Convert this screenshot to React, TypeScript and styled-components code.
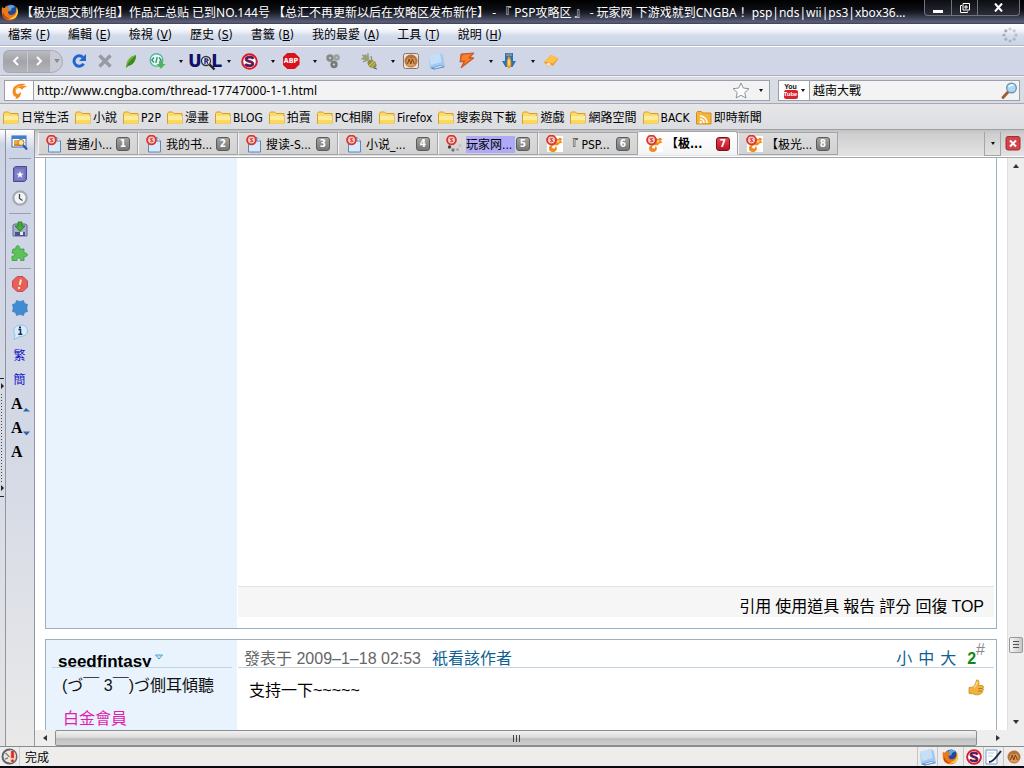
import React from 'react';
import styled, { createGlobalStyle, css } from 'styled-components';

const uiFont = `"DejaVu Sans Condensed", "Noto Sans", "Noto Sans CJK TC", sans-serif`;
const wideFont = `"Noto Sans", "Noto Sans CJK TC", sans-serif`;
const pageFont = `"Liberation Sans", "Noto Sans CJK TC", sans-serif`;

const Global = createGlobalStyle`
  *, *::before, *::after { box-sizing: border-box; }
  body { margin: 0; font: 12px/16px ${uiFont}; color: #000; }
  button, input { font: inherit; color: inherit; border: 0; padding: 0; margin: 0; background: none; }
  a { color: inherit; text-decoration: none; }
  svg { display: block; flex: none; }
`;

const Shell = styled.div`
  display: flex;
  flex-direction: column;
  height: 100vh;
  overflow: hidden;
  background: #dcdde4;
`;

/* ---------- title bar ---------- */

const TitleBar = styled.header`
  display: flex;
  align-items: center;
  height: 24px;
  padding: 0 4px 0 1px;
  background: linear-gradient(#000 0, #0c0d12 9px, #1d1f29 13px, #5b607b 22px, #3c4052 100%);
  color: #fff;
`;

const Title = styled.h1`
  flex: 1;
  min-width: 0;
  margin: 0 0 0 2px;
  font: 400 12px/16px ${wideFont};
  white-space: nowrap;
  overflow: hidden;
  padding-top: 2px;
`;

const Caption = styled.div`
  display: flex;
  align-self: flex-start;
  height: 16px;
  border: 1px solid #70737f;
  border-top: 0;
  border-radius: 0 0 4px 4px;
  background: linear-gradient(#0d0e12, #2b2d38);
`;

const CaptionButton = styled.button<{ $wide?: boolean }>`
  display: flex;
  align-items: center;
  justify-content: center;
  width: ${p => (p.$wide ? 42 : 26)}px;
  & + & { border-left: 1px solid #70737f; }
`;

/* ---------- menu ---------- */

const MenuBar = styled.nav`
  display: flex;
  align-items: center;
  height: 22px;
  background: linear-gradient(#fff 0, #f2f5fb 6px, #d3dbea 12px, #ccd5e8 100%);
  border-bottom: 1px solid #b2b7c4;
`;

const MenuItem = styled.button`
  padding: 0 10px 0 8px;
  white-space: pre;
`;

const Throbber = styled.div`
  margin-left: auto;
  padding-right: 6px;
`;

/* ---------- toolbar ---------- */

const Toolbar = styled.div`
  display: flex;
  align-items: center;
  height: 30px;
  padding-left: 3px;
  border-top: 1px solid #fff;
  border-bottom: 1px solid #a9afbd;
  background: #d1d6e6;
`;

const NavPill = styled.div`
  display: flex;
  height: 23px;
  margin-right: 7px;
  border: 1px solid #a9aab0;
  border-radius: 6px 12px 12px 6px;
  background: linear-gradient(#b9bac0, #a3a4a9 50%, #b4b5ba);
  overflow: hidden;
`;

const NavButton = styled.button<{ $small?: boolean }>`
  display: flex;
  align-items: center;
  justify-content: center;
  width: ${p => (p.$small ? 12 : 23)}px;
  background: ${p => (p.$small ? '#c9ccd6' : 'transparent')};
  & + & { border-left: 1px solid #c8c9cd; }
`;

const ToolButton = styled.button<{ $gap?: number }>`
  display: flex;
  align-items: center;
  justify-content: center;
  min-width: 18px;
  height: 22px;
  margin-left: ${p => p.$gap ?? 8}px;
`;

const CaretButton = styled.button<{ $gap?: number }>`
  width: 6px;
  height: 22px;
  margin-left: ${p => p.$gap ?? 12}px;
  display: flex;
  align-items: center;
  justify-content: center;
  &::after {
    content: '';
    border: 2px solid transparent;
    border-top: 3px solid #111;
    border-bottom: 0;
  }
`;

/* ---------- location row ---------- */

const LocationRow = styled.form`
  display: flex;
  gap: 8px;
  height: 28px;
  padding: 3px 4px 2px;
  background: #dadce4;
  border-top: 1px solid #f1f2f6;
  border-bottom: 1px solid #a5a9b2;
`;

const Field = styled.div<{ $search?: boolean }>`
  display: flex;
  align-items: stretch;
  border: 1px solid #9a9fad;
  background: #f3f3f3;
  min-width: 0;
  ${p => (p.$search ? css`flex: 0 0 242px;` : css`flex: 1;`)}
`;

const FieldIcon = styled.button<{ $divided?: boolean; $w: number }>`
  display: flex;
  align-items: center;
  justify-content: center;
  gap: 3px;
  flex: none;
  width: ${p => p.$w}px;
  ${p => p.$divided && css`background: #fdfdfd; border-right: 1px solid #9a9fad;`}
`;

const TextInput = styled.input`
  flex: 1;
  min-width: 0;
  padding: 0 3px;
  outline: 0;
  font-family: ${wideFont};
`;

/* ---------- bookmarks ---------- */

const BookmarkBar = styled.nav`
  display: flex;
  align-items: center;
  gap: 6px;
  height: 26px;
  padding: 2px 3px 0;
  background: linear-gradient(#e7e7ea, #dcdde0);
  border-bottom: 1px solid #9ea2a8;
  white-space: nowrap;
`;

const Bookmark = styled.a`
  display: flex;
  align-items: center;
  gap: 2px;
`;

/* ---------- body ---------- */

const Body = styled.div`
  flex: 1;
  min-height: 0;
  display: flex;
`;

const Splitter = styled.div`
  width: 6px;
  flex: none;
  display: flex;
  flex-direction: column;
  align-items: center;
  padding-top: 248px;
  background: linear-gradient(#fff, #cdd4e6 14px, #d6dae4 50%, #e4e4e4);
  border-right: 1px solid #8f95a3;
`;

const SideBar = styled.aside`
  width: 29px;
  flex: none;
  display: flex;
  flex-direction: column;
  align-items: stretch;
  padding: 1px 2px 0 1px;
  background: linear-gradient(#fff, #cdd4e6 20px, #d3d8e5 50%, #e9e9e9);
  border-right: 1px solid #9297a3;
`;

const SideButton = styled.button`
  height: 24px;
  display: flex;
  align-items: center;
  justify-content: center;
  color: #1111c8;
`;

const SideRule = styled.hr`
  width: 22px;
  height: 7px;
  margin: 0 auto;
  border: solid transparent;
  border-width: 3px 0;
  background: #9a9fad;
  background-clip: padding-box;
`;

const Main = styled.div`
  flex: 1;
  min-width: 0;
  display: flex;
  flex-direction: column;
`;

/* ---------- tabs ---------- */

const TabBar = styled.div`
  display: flex;
  align-items: flex-end;
  height: 28px;
  padding: 0 3px 2px;
  background: linear-gradient(#c2c2c3, #cfcfd0 4px, #e3e3e4 26px, #fff 26px);
  border-bottom: 1px solid #a4a8ae;
`;

const Tab = styled.button<{ $active?: boolean }>`
  display: flex;
  align-items: center;
  flex: 0 1 100px;
  min-width: 0;
  height: ${p => (p.$active ? 24 : 23)}px;
  padding: 1px 7px 0;
  text-align: left;
  border: 1px solid #a3a5a8;
  border-left-color: #f4f4f4;
  background: ${p => (p.$active ? 'linear-gradient(#fff, #f4f4f4)' : 'linear-gradient(#dcdcdc, #d2d2d2)')};
  font-weight: ${p => (p.$active ? 700 : 400)};
  ${p => p.$active && css`border-bottom-color: #f4f4f4; border-radius: 3px 3px 0 0;`}
`;

const TabLabel = styled.span<{ $loading?: boolean }>`
  flex: 1;
  min-width: 0;
  margin-left: 3px;
  padding-top: 1px;
  white-space: nowrap;
  overflow: hidden;
  ${p => p.$loading && css`background: #aeaaf5;`}
`;

const TabBadge = styled.span<{ $active?: boolean }>`
  flex: none;
  width: 14px;
  height: 14px;
  margin-left: 1px;
  border: 1px solid ${p => (p.$active ? '#7c1018' : '#5b5b5b')};
  border-radius: 3px;
  background: ${p => (p.$active ? 'linear-gradient(#ea4653, #b91322)' : 'linear-gradient(#a3a3a3, #777)')};
  color: #fff;
  font-size: 10px;
  line-height: 12px;
  font-weight: 700;
  text-align: center;
`;

const TabTools = styled.div`
  display: flex;
  align-self: stretch;
  align-items: center;
  margin: 2px 0 0 auto;
`;

const TabTool = styled.button`
  display: flex;
  align-items: center;
  justify-content: center;
  width: 17px;
  height: 24px;
  margin-right: 4px;
  border: 1px solid #a3a5a8;
  border-top: 0;
`;

/* ---------- page ---------- */

const Viewport = styled.div`
  flex: 1;
  min-height: 0;
  display: flex;
`;

const Page = styled.main`
  flex: 1;
  min-width: 0;
  display: flex;
  flex-direction: column;
  gap: 10px;
  padding: 0 10px;
  overflow: hidden;
  background: #fff;
  font: 16px/20px ${pageFont};
`;

const Post = styled.article<{ $grow?: boolean }>`
  display: flex;
  border: 1px solid #9db0be;
  ${p => (p.$grow
    ? css`flex: 1; min-height: 0; border-top: 0;`
    : css`flex: none; min-height: 91px; border-bottom: 0;`)}
`;

const AuthorColumn = styled.div`
  flex: 0 0 191px;
  background: #e8f3fd;
`;

const PostColumn = styled.div`
  flex: 1;
  min-width: 0;
  display: flex;
  flex-direction: column;
  padding: 0 2px 0 1px;
`;

const PostFooter = styled.footer`
  display: flex;
  justify-content: flex-end;
  align-items: center;
  gap: 4px;
  height: 31px;
  margin: auto 0 11px;
  padding: 9px 10px 0 0;
  border-top: 1px solid #dfe6ea;
  background: #f6f6f6;
`;

const AuthorName = styled.div`
  display: flex;
  align-items: flex-start;
  gap: 3px;
  height: 28px;
  margin: 0 5px 0 6px;
  padding: 12px 0 0 6px;
  border-bottom: 1px solid #c3d3e0;
  overflow: hidden;
  font-size: 17px;
  font-weight: 700;
`;

const AuthorText = styled.p<{ $rank?: boolean }>`
  margin: ${p => (p.$rank ? '13px 0 0 17px' : '8px 0 0 16px')};
  color: ${p => (p.$rank ? '#e31cb0' : '#111')};
  white-space: pre;
`;

const PostHeader = styled.div`
  display: flex;
  align-items: flex-end;
  height: 28px;
  padding: 0 9px 0 6px;
  border-bottom: 1px solid #c3d3e0;
  color: #666;
  line-height: 16px;
  white-space: nowrap;
`;

const BlueLink = styled.a`
  color: #0d5f94;
`;

const AuthorOnly = styled(BlueLink)`
  margin-left: 11px;
`;

const Sizes = styled.div`
  display: flex;
  gap: 6px;
  margin-left: auto;
`;

const Floor = styled.span`
  margin-left: 11px;
  color: #118a11;
  font-weight: 700;
`;

const Hash = styled.sup`
  align-self: flex-start;
  padding-top: 2px;
  font-size: 16px;
  color: #888;
`;

const Message = styled.div`
  display: flex;
  align-items: flex-start;
  justify-content: space-between;
  padding: 11px 10px 0 11px;
  line-height: 24px;
`;

/* ---------- scroll bars ---------- */

const VScroll = styled.div`
  width: 17px;
  flex: none;
  display: flex;
  flex-direction: column;
  align-items: center;
  background: #eee;
  border-left: 1px solid #e0e0e0;
`;

const HScroll = styled.div`
  flex: none;
  display: flex;
  height: 16px;
  background: #eee;
`;

const ScrollArrow = styled.button`
  width: 20px;
  height: 16px;
  display: flex;
  align-items: center;
  justify-content: center;
`;

const ScrollCorner = styled.span`
  width: 16px;
`;

const VThumb = styled.div`
  width: 14px;
  height: 16px;
  margin: auto 0 61px;
  padding: 3px;
  border: 1px solid #999;
  border-radius: 2px;
  background: linear-gradient(90deg, #f6f6f6, #c8c8c8);
  &::before {
    content: '';
    display: block;
    height: 7px;
    background: repeating-linear-gradient(#555 0 1px, transparent 1px 3px);
  }
`;

const HThumb = styled.div`
  flex: 1;
  display: flex;
  align-items: center;
  justify-content: center;
  margin-right: 11px;
  border: 1px solid #8c8f90;
  border-radius: 2px;
  background: linear-gradient(#f2f2f2, #dcdcdc 45%, #bdbfbf 55%, #cfcfcf);
  &::before {
    content: '';
    width: 7px;
    height: 7px;
    background: repeating-linear-gradient(90deg, #444 0 1px, transparent 1px 3px);
  }
`;

/* ---------- status ---------- */

const StatusBar = styled.footer`
  display: flex;
  align-items: center;
  height: 22px;
  border-top: 1px solid #868c90;
  border-bottom: 2px solid #08080f;
  background: #efedec;
`;

const StatusCell = styled.span<{ $w: number }>`
  display: flex;
  align-items: center;
  justify-content: center;
  height: 19px;
  width: ${p => p.$w}px;
  border-left: 1px solid #c6c6c6;
  &:first-child { border-left: 0; border-right: 1px solid #cfcfcf; }
`;

const StatusText = styled.span`
  flex: 1;
  padding: 2px 0 0 5px;
`;

/* ---------- drawings ---------- */

const Firefox = ({ size = 18 }: { size?: number }) => (
  <svg width={size} height={size} viewBox="0 0 18 18">
    <circle cx="9.5" cy="8.5" r="7" fill="#24479a" />
    <path d="M7 3c3-2 6-1 7 1-1 1-2 0-3 1s0 2-2 3-2-1-3-1z" fill="#5fa6e0" />
    <path d="M1 4c1 1 2 1 3 1C5 3 6 3 7 3 6 5 8 6 9 7c-1 1-2 1-2 2 0 3 3 4 6 2 2-1 3-4 2-7 3 4 2 9-1 11.500-4 3-10 2-12-2C.500 10 .500 7 1 4z" fill="#ea7a17" />
    <path d="M15.500 4c2.500 4 1.500 8-1 10.500-2 2-6 2-8 1 4 0 8-2 9-6 .400-2 0-3.500 0-5.500z" fill="#ffce45" />
    <path d="M2 9c1 4 4 6.500 8 6.500-4 1.500-7-1-8-3z" fill="#c7380f" />
  </svg>
);

const Reload = () => (
  <svg width="16" height="16" viewBox="0 0 16 16">
    <path d="M12.600 10.800A5.200 5.200 0 1 1 11.800 4.300" fill="none" stroke="#1f66cf" strokeWidth="3" />
    <path d="M15 1v7H8z" fill="#1f66cf" />
  </svg>
);

const Stop = () => (
  <svg width="16" height="16" viewBox="0 0 16 16">
    <path d="M2.500 2.500l11 11M13.500 2.500l-11 11" stroke="#989aa3" strokeWidth="3.400" />
  </svg>
);

const Leaf = () => (
  <svg width="16" height="16" viewBox="0 0 16 16">
    <path d="M3 15C3 7 7 3 13 2c0 6-3 10-8 11z" fill="#6fb43a" />
    <path d="M3 15C5 9 9 6 13 2c0 6-3 10-8 11z" fill="#3f8a1f" />
  </svg>
);

const CodeBubble = () => (
  <svg width="17" height="16" viewBox="0 0 17 16">
    <circle cx="7.500" cy="7" r="6.300" fill="#e9f8f4" stroke="#59b8a2" strokeWidth="1.400" />
    <path d="M5 4.500L2.800 7 5 9.500M10 4.500L12.200 7 10 9.500M8.200 4L6.800 10" fill="none" stroke="#2b9077" strokeWidth="1.300" />
    <path d="M10 8h4v3h2.500L12 15.800 7.500 11H10z" fill="#50b45c" />
  </svg>
);

const UrlMark = styled.span`
  position: relative;
  display: flex;
  width: 34px;
  justify-content: space-between;
  font: 700 17px/17px "DejaVu Sans", sans-serif;
  color: #10106c;
  svg { position: absolute; left: 12px; top: 1px; }
`;

const SBadge = ({ size = 17 }: { size?: number }) => (
  <svg width={size} height={size} viewBox="0 0 17 17">
    <circle cx="8.500" cy="8.500" r="7.300" fill="#fff" stroke="#d01d2b" strokeWidth="2" />
    <path d="M12.300 5.800C11 3.400 5.200 3.600 5.200 6.200c0 2.600 6.600 1.700 6.600 4.600 0 2.700-6 2.600-7.400.200" fill="none" stroke="#c3172a" strokeWidth="3" />
    <path d="M12.300 5.800C11 3.400 5.200 3.600 5.200 6.200c0 2.600 6.600 1.700 6.600 4.600 0 2.700-6 2.600-7.400.200" fill="none" stroke="#1d2c8c" strokeWidth="1.500" />
  </svg>
);

const Abp = styled.span`
  display: flex;
  align-items: center;
  justify-content: center;
  width: 17px;
  height: 16px;
  background: #d8131b;
  clip-path: polygon(28% 0, 72% 0, 100% 28%, 100% 72%, 72% 100%, 28% 100%, 0 72%, 0 28%);
  color: #fff;
  font-size: 7px;
  line-height: 8px;
  font-weight: 700;
`;

const Cogs = () => (
  <svg width="16" height="16" viewBox="0 0 16 16" fill="none" stroke="#858a87" strokeWidth="2.600">
    <circle cx="5" cy="5" r="2.400" />
    <circle cx="11.500" cy="4.500" r="2" stroke="#9da29f" />
    <circle cx="9" cy="11.500" r="2.400" stroke="#777c79" />
  </svg>
);

const Bug = () => (
  <svg width="18" height="18" viewBox="0 0 18 18">
    <path d="M2 3l4 1M1 7l4 0M8 1l0 4M3 10l4-2M11 4l1 4" stroke="#8b9172" strokeWidth="1.200" />
    <ellipse cx="6" cy="6" rx="3.500" ry="3" fill="#9aa07a" transform="rotate(40 6 6)" />
    <ellipse cx="12" cy="12" rx="5" ry="3.800" fill="#8a8d4b" transform="rotate(40 12 12)" />
    <path d="M9 14l5-5M11 16l4-5" stroke="#d8c04d" strokeWidth="1.200" />
    <path d="M14 16l3 1" stroke="#555" />
  </svg>
);

const Monkey = ({ framed }: { framed?: boolean }) => (
  <svg width="16" height="16" viewBox="0 0 16 16">
    {framed && <rect x=".500" y=".500" width="15" height="15" rx="2" fill="#e9e2dc" stroke="#8a7768" />}
    <circle cx="8" cy="8" r="6.500" fill="#b5713a" />
    <path d="M4 12c-1-4 0-7 2-7s2 2 2 3c0-1 0-3 2-3s3 3 2 7c-1 2-7 2-8 0z" fill="#dc9a5c" />
    <path d="M4.500 11L6.200 6l1.600 5 1.600-5 2 5" fill="none" stroke="#7a3c14" />
  </svg>
);

const Note = () => (
  <svg width="18" height="18" viewBox="0 0 18 18">
    <path d="M1 4l11-3 3 2 2 12-11 2.500-4-1z" fill="#a3c9f0" />
    <path d="M1 4l11-3 1.500 9L3 13z" fill="#c6dff8" />
    <path d="M2.500 16L13 13l4 2-11 2.500z" fill="#4a84c4" />
    <path d="M5 16l8-2.500 2 1-8 2z" fill="#d8eafc" />
  </svg>
);

const Bolt = () => (
  <svg width="18" height="18" viewBox="0 0 18 18">
    <path d="M3 2l13-1-4 4.500 4 .500L3 16l3-6.500-4 .500z" fill="#e8601a" stroke="#b94a14" strokeWidth=".800" />
    <path d="M4.500 3l9-1-4.500 4.500 4 .500-7 5 2-4-5 .500z" fill="#f78236" />
  </svg>
);

const DownMan = () => (
  <svg width="14" height="16" viewBox="0 0 14 16">
    <path d="M3 0h8v8h3l-3.500 6h-7L0 8h3z" fill="#2673b6" />
    <path d="M4 .500h6V3H4z" fill="#7e8f99" />
    <path d="M7 3c2.500 3 2.500 7 2 11l-2 1.500L5 14C4.500 10 4.500 6 7 3z" fill="#f59a23" />
    <path d="M7 5.500c1.300 2 1.300 5 0 8-1.300-3-1.300-6 0-8z" fill="#ffe06b" />
  </svg>
);

const Tag = () => (
  <svg width="16" height="14" viewBox="0 0 16 14">
    <path d="M1 8l7-7 7.500 3.500L10 12l-2.500-1.500L5 13z" fill="#ee9a22" />
    <path d="M1.500 7.500L8 1l7 3.300-5 5.200z" fill="#ffc04c" />
    <path d="M3 10l2.500-1.500L8 10l-3 2.500z" fill="#efe6d6" />
  </svg>
);

const SiteMark = () => (
  <svg width="18" height="18" viewBox="0 0 18 18">
    <path d="M3 7C4 3 10 1 16 2c-2 1-3 1-4 2 2-.500 4 0 5 1-3 0-4 1-5 3-1-2-4-3-6 0-1 2 0 4 2 4 2-.500 2-2 3-2 0 4-2 7-6 7 1-1 1-1.500 1-2-3-1-4-4-3-8z" fill="#f48a1c" />
    <path d="M5 8c1-3 5-5 8-4-4 0-6 2-7 4z" fill="#ffd16a" />
  </svg>
);

const Star = () => (
  <svg width="18" height="17" viewBox="0 0 18 17">
    <path d="M9 1l2.300 5 5.700.700-4.200 3.800 1.100 5.500L9 13.300 4.100 16l1.100-5.500L1 6.700 6.700 6z" fill="#fdfdfd" stroke="#8f949c" strokeLinejoin="round" />
  </svg>
);

const Magnifier = () => (
  <svg width="17" height="17" viewBox="0 0 17 17">
    <path d="M7 10l-5 5.500" stroke="#a15c2e" strokeWidth="2.800" strokeLinecap="round" />
    <circle cx="10.500" cy="6" r="4.800" fill="#a9dbf5" stroke="#7593b5" strokeWidth="1.400" />
    <path d="M8 5c1-2 3-2.500 4.500-1.500" fill="none" stroke="#fff" strokeWidth="1.400" />
  </svg>
);

const YouTube = styled.span`
  display: flex;
  flex-direction: column;
  align-items: center;
  font: 700 7px/7px "Liberation Sans", sans-serif;
  color: #111;
  b {
    width: 14px;
    height: 9px;
    border-radius: 2px;
    background: #d8232e;
    color: #fff;
    font-size: 6px;
    line-height: 9px;
    text-align: center;
  }
`;

const SmallCaret = styled.i`
  border: 2px solid transparent;
  border-top: 3px solid #111;
  border-bottom: 0;
`;

const Folder = () => (
  <svg width="16" height="16" viewBox="0 0 16 16">
    <path d="M.500 13.500v-10l1-1.500h4l1.500 1.500h8v10z" fill="#fbdc6b" stroke="#d3a02c" />
    <path d="M1 6h14v7.500H1z" fill="#fdeb9c" />
    <path d="M1 10h14v3.500H1z" fill="#fbd95e" />
  </svg>
);

const Rss = () => (
  <svg width="16" height="16" viewBox="0 0 16 16">
    <path d="M.500 14v-11l1-1.500h4l1.500 1.500h8v11z" fill="#f6b53c" stroke="#d28d1c" />
    <path d="M4 6a7 7 0 0 1 7 7M4 9a4 4 0 0 1 4 4" fill="none" stroke="#fff" strokeWidth="1.600" />
    <circle cx="4.800" cy="12.200" r="1.200" fill="#fff" />
  </svg>
);

const Dots = ({ size, color }: { size: number; color: string }) => (
  <svg width={size} height={size} viewBox="0 0 16 16" fill={color}>
    {[[8, 2], [12.200, 3.800], [14, 8], [12.200, 12.200], [8, 14], [3.800, 12.200], [2, 8], [3.800, 3.800]].map(([x, y], i) => (
      <circle key={i} cx={x} cy={y} r="1.600" opacity={0.5 + i * 0.07} />
    ))}
  </svg>
);

const ScriptOff = () => (
  <g>
    <circle cx="5.500" cy="5" r="4.400" fill="#f8cfca" stroke="#d9372f" strokeWidth="1.900" />
    <path d="M4 3.200l3 3.600M7.200 3.600c-2-1-3.500 1-1.600 1.600s.600 2-1.400 1.400" fill="none" stroke="#c93a34" />
  </g>
);

type TabKind = 'page' | 'loading' | 'site';

const TabIcon = ({ kind }: { kind: TabKind }) => (
  <svg width="17" height="18" viewBox="0 0 17 18">
    {kind === 'page' && (
      <g>
        <path d="M2.500 2.500h8.500l3.500 3.500v11h-12z" fill="#d9eafd" stroke="#5d88c0" />
        <path d="M11 2.500V6h3.500" fill="#fff" stroke="#5d88c0" />
      </g>
    )}
    {kind === 'loading' && (
      <g>
        <circle cx="3.500" cy="12" r="1.700" fill="#444" />
        <circle cx="7" cy="15" r="1.700" fill="#777" />
        <circle cx="11.500" cy="14.500" r="1.600" fill="#aaa" />
        <circle cx="14" cy="10.500" r="1.600" fill="#c4c4c4" />
        <circle cx="13" cy="5.500" r="1.500" fill="#ddd" />
      </g>
    )}
    {kind === 'site' && (
      <g>
        <path d="M1 1h16v16H1z" fill="#fff" />
        <path d="M9 2.500l3 1.500 2-1.500 2.500 2-2 1 2 2-3 1-2 2C9 10 6.500 10 6 12c0 1.500 2 2 3 1l.500-2c2 1 2 5-1.500 6-3 .500-5-1-5-3.500 0-3 3-4 6-7z" fill="#f28a22" />
        <path d="M10 6l3-1 1 1-2 2z" fill="#ffd070" />
      </g>
    )}
    <ScriptOff />
  </svg>
);

const CloseGlyph = () => (
  <svg width="16" height="15" viewBox="0 0 16 15">
    <rect x="1" y=".500" width="14" height="13.500" rx="2" fill="#d4424a" stroke="#a32d33" />
    <path d="M5 4.500l6 6M11 4.500l-6 6" stroke="#fff" strokeWidth="2" />
  </svg>
);

const Triangle = ({ dir }: { dir: 'up' | 'down' | 'left' | 'right' }) => (
  <svg width="8" height="8" viewBox="0 0 8 8">
    <path
      fill="#333"
      d={{ up: 'M1 6l3-4 3 4z', down: 'M1 2l3 4 3-4z', left: 'M6 1L2 4l4 3z', right: 'M2 1l4 3-4 3z' }[dir]}
    />
  </svg>
);

const Grip = () => (
  <svg width="5" height="120" viewBox="0 0 5 120">
    <path d="M0 .500h4M0 118.500h4" stroke="#222" />
    <path d="M1 5l3 3-3 3zM1 107l3 3-3 3z" fill="#222" />
    <path d="M1.500 16v88" stroke="#444" strokeDasharray="1 2" />
  </svg>
);

const sideIcons: Record<string, React.ReactNode> = {
  find: (
    <svg width="18" height="16" viewBox="0 0 18 16">
      <rect x="1" y="1" width="14" height="11" fill="#fff" stroke="#3566b0" />
      <path d="M1 1h14v3H1z" fill="#3f7fd0" />
      <path d="M3 5h4v4H3z" fill="#f0a838" />
      <path d="M3 10h8" stroke="#d6872b" strokeWidth="2" />
      <circle cx="10" cy="7.500" r="3" fill="#ffe0a0" stroke="#a8742b" />
      <path d="M12 10l4 4.500" stroke="#2d58a8" strokeWidth="2.200" />
    </svg>
  ),
  book: (
    <svg width="14" height="16" viewBox="0 0 14 16">
      <path d="M.500 2l2-1.500h11v13l-2 2H.500z" fill="#6f70bd" stroke="#4a4b93" />
      <path d="M2 3h9.500v11H2z" fill="#7f80cc" />
      <path d="M7 5l1 2.500 2.500.200-2 1.500.700 2.500L7 10.300l-2.200 1.400.700-2.500-2-1.500L6 7.500z" fill="#fff" />
    </svg>
  ),
  clock: (
    <svg width="16" height="16" viewBox="0 0 16 16">
      <circle cx="8" cy="8" r="6.700" fill="#f2f5f8" stroke="#a5a9b1" strokeWidth="2.200" />
      <path d="M7.500 4v4.500l3 2" fill="none" stroke="#444" strokeWidth="1.300" />
    </svg>
  ),
  save: (
    <svg width="16" height="16" viewBox="0 0 16 16">
      <path d="M1 4l2-1h10l2 1v11H1z" fill="#a9add2" stroke="#63679a" />
      <path d="M3 11h10v4H3z" fill="#4e5288" />
      <path d="M8 11h3v3H8z" fill="#e8e9f4" />
      <path d="M6 1h4v4h3L8 10.500 3 5h3z" fill="#3fb02f" stroke="#257718" strokeWidth=".800" />
    </svg>
  ),
  puzzle: (
    <svg width="17" height="16" viewBox="0 0 17 16">
      <path d="M2 4h3C3.500 0 9.500-.500 8.500 3.500V4H13v4c4.500-1 4.500 4.500 0 3.500V15.500H9.500c1-3-4-3.500-3.500 0H1V11c3.500 1 3.500-3.500 0-3z" fill="#5cc35a" stroke="#3c9a42" strokeWidth=".800" />
    </svg>
  ),
  alert: (
    <svg width="16" height="16" viewBox="0 0 16 16">
      <path d="M5 .500h6L15.500 5v6L11 15.500H5L.500 11V5z" fill="#e5605c" stroke="#cf4a48" />
      <path d="M9 3.500L7.700 9" stroke="#ffe9b0" strokeWidth="2" />
      <circle cx="7" cy="12" r="1.200" fill="#ffe9b0" />
    </svg>
  ),
  gear: (
    <svg width="16" height="16" viewBox="0 0 16 16">
      <path d="M4.500 .500q3.500 2 7 0l1 3 3 1q-1.500 3.500 0 7l-3 1-1 3q-3.500-2-7 0l-1-3-3-1q1.500-3.500 0-7l3-1z" fill="#3f8cd3" stroke="#2f74b7" strokeWidth=".600" />
    </svg>
  ),
  info: (
    <svg width="16" height="16" viewBox="0 0 16 16">
      <path d="M8.500 1C13 1 15.500 3.500 15.500 7S12 12.500 8 12.500L2 15.500l1-4.500C0 6 3 1 8.500 1z" fill="#d5ecfb" stroke="#8ec3e6" />
      <path d="M6.500 5.500h2v4.500M6.300 10.200h4" fill="none" stroke="#252560" strokeWidth="1.500" />
      <circle cx="8" cy="3.400" r="1.100" fill="#252560" />
    </svg>
  ),
};

const FontLetter = styled.span`
  display: flex;
  align-items: flex-end;
  width: 17px;
  font: 700 16px/16px "Liberation Serif", serif;
  color: #000;
`;

const FontArrow = ({ up }: { up?: boolean }) => (
  <svg width="7" height="5" viewBox="0 0 7 5">
    <path d={up ? 'M0 4.500L3 1l4 3.500z' : 'M0 .500h7L3.500 4.500z'} fill="#2a66ab" />
  </svg>
);

const Thumb = () => (
  <svg width="16" height="17" viewBox="0 0 16 17">
    <path d="M1 8.500l4-.500C7 6 8 4 8.500 1 11 .500 11.500 3 10.500 6.500h4c1.500 1 1.500 2 .500 3 .800 1 .500 2-.500 2.600.300 1.200-.300 2-1.500 2.200-.500 2-6 2-8 .500L1 14.500z" fill="#f0b23a" stroke="#c98a24" strokeWidth=".800" />
    <path d="M6 8.500C8 7 9 5 9.300 2.500" stroke="#ffe08a" fill="none" strokeWidth="1.400" />
    <path d="M10 9.500h4.500M10 12h4" stroke="#c07a1c" />
  </svg>
);

const StatusScript = () => (
  <svg width="17" height="17" viewBox="0 0 17 17">
    <circle cx="8.500" cy="8.500" r="7" fill="#f4e9d8" stroke="#5b6470" strokeWidth="2" />
    <path d="M9 2c4 0 6 3 6 6.500S13 15 9 15z" fill="#f6c9b8" />
    <path d="M4.500 5l4 4M4 11l3-1" stroke="#7b8790" strokeWidth="1.500" />
    <path d="M11.500 3v7" stroke="#d6281e" strokeWidth="2.600" />
    <circle cx="11.500" cy="12.800" r="1.400" fill="#d6281e" />
  </svg>
);

const PenPage = () => (
  <svg width="17" height="16" viewBox="0 0 17 16">
    <path d="M1 1h11v14H1z" fill="#fff" stroke="#6f9fd0" />
    <path d="M3 4h6M3 7h5" stroke="#b5cbe2" />
    <path d="M4 13c3 0 5-2 12-11" fill="none" stroke="#1c2a3c" strokeWidth="2" />
  </svg>
);

/* ---------- data ---------- */

const menus: [string, string][] = [
  ['檔案', 'F'], ['編輯', 'E'], ['檢視', 'V'], ['歷史', 'S'],
  ['書籤', 'B'], ['我的最愛', 'A'], ['工具', 'T'], ['說明', 'H'],
];

const bookmarks = ['日常生活', '小說', 'P2P', '漫畫', 'BLOG', '拍賣', 'PC相關', 'Firefox', '搜索與下載', '遊戲', '網路空間', 'BACK'];

const tabs: { label: string; kind: TabKind; active?: boolean }[] = [
  { label: '普通小...', kind: 'page' },
  { label: '我的书...', kind: 'page' },
  { label: '搜读-S...', kind: 'page' },
  { label: '小说_...', kind: 'page' },
  { label: '玩家网...', kind: 'loading' },
  { label: '『 PSP...', kind: 'site' },
  { label: '【极...', kind: 'site', active: true },
  { label: '【极光...', kind: 'site' },
];

export default function App() {
  return (
    <Shell>
      <Global />
      <TitleBar>
        <Firefox />
        <Title>
          【极光图文制作组】作品汇总贴 已到NO.144号 【总汇不再更新以后在攻略区发布新作】 - 『 PSP攻略区 』 - 玩家网 下游戏就到CNGBA！ psp|nds|wii|ps3|xbox36...
        </Title>
        <Caption>
          <CaptionButton aria-label="最小化">
            <svg width="10" height="10" viewBox="0 0 10 10"><path d="M0 7h10v3H0z" fill="#fff" /></svg>
          </CaptionButton>
          <CaptionButton aria-label="還原">
            <svg width="10" height="10" viewBox="0 0 10 10" fill="none" stroke="#fff">
              <path d="M3 .500h6.500v6.500h-6.500zM5 3h2v2H5zM2 2.500H.500v7h7V8.500" />
            </svg>
          </CaptionButton>
          <CaptionButton $wide aria-label="關閉">
            <svg width="9" height="9" viewBox="0 0 9 9"><path d="M1 .500l7 8M8 .500l-7 8" stroke="#fff" strokeWidth="2" /></svg>
          </CaptionButton>
        </Caption>
      </TitleBar>

      <MenuBar>
        {menus.map(([name, key]) => (
          <MenuItem key={key}>{name} (<u>{key}</u>)</MenuItem>
        ))}
        <Throbber><Dots size={16} color="#a3a9b5" /></Throbber>
      </MenuBar>

      <Toolbar>
        <NavPill>
          <NavButton aria-label="上一頁">
            <svg width="9" height="10" viewBox="0 0 9 10"><path d="M7 1L3 5l4 4" fill="none" stroke="#fff" strokeWidth="2" /></svg>
          </NavButton>
          <NavButton aria-label="下一頁">
            <svg width="9" height="10" viewBox="0 0 9 10"><path d="M2 1l4 4-4 4" fill="none" stroke="#fff" strokeWidth="2" /></svg>
          </NavButton>
          <NavButton $small aria-label="最近瀏覽">
            <svg width="6" height="4" viewBox="0 0 6 4"><path d="M0 0h6L3 4z" fill="#888b94" /></svg>
          </NavButton>
        </NavPill>
        <ToolButton $gap={0} aria-label="重新載入"><Reload /></ToolButton>
        <ToolButton aria-label="停止"><Stop /></ToolButton>
        <ToolButton aria-label="書寫"><Leaf /></ToolButton>
        <ToolButton aria-label="原始碼"><CodeBubble /></ToolButton>
        <CaretButton aria-label="更多原始碼選項" />
        <ToolButton $gap={4}>
          <UrlMark>
            <span>U</span><span>L</span>
            <svg width="16" height="17" viewBox="0 0 16 17">
              <circle cx="6" cy="7" r="4.500" fill="#e6e6ef" stroke="#333" strokeWidth="1.300" />
              <path d="M5 10V4.800h1.500q1.500 0 1.500 1.200t-1.500 1.200H5M6.500 7.200L8 9.800" fill="none" stroke="#10106c" strokeWidth="1.200" />
              <path d="M9.500 10.500l5 5" stroke="#222" strokeWidth="2.400" />
            </svg>
          </UrlMark>
        </ToolButton>
        <CaretButton $gap={4} aria-label="更多網址選項" />
        <ToolButton aria-label="腳本"><SBadge /></ToolButton>
        <CaretButton aria-label="更多腳本選項" />
        <ToolButton $gap={6}><Abp>ABP</Abp></ToolButton>
        <CaretButton aria-label="更多過濾選項" />
        <ToolButton $gap={6} aria-label="設定"><Cogs /></ToolButton>
        <ToolButton $gap={18} aria-label="除錯"><Bug /></ToolButton>
        <CaretButton aria-label="更多除錯選項" />
        <ToolButton $gap={6} aria-label="使用者腳本"><Monkey framed /></ToolButton>
        <ToolButton aria-label="便箋"><Note /></ToolButton>
        <ToolButton $gap={12} aria-label="快速下載"><Bolt /></ToolButton>
        <CaretButton aria-label="更多下載選項" />
        <ToolButton $gap={6} aria-label="下載"><DownMan /></ToolButton>
        <CaretButton aria-label="更多選項" />
        <ToolButton $gap={6} aria-label="標籤"><Tag /></ToolButton>
      </Toolbar>

      <LocationRow onSubmit={e => e.preventDefault()}>
        <Field>
          <FieldIcon type="button" $divided $w={29} aria-label="網站資訊"><SiteMark /></FieldIcon>
          <TextInput aria-label="網址" defaultValue="http://www.cngba.com/thread-17747000-1-1.html" />
          <FieldIcon type="button" $w={22} aria-label="加入書籤"><Star /></FieldIcon>
          <FieldIcon type="button" $w={17} aria-label="網址清單"><SmallCaret /></FieldIcon>
        </Field>
        <Field $search>
          <FieldIcon type="button" $divided $w={31}>
            <YouTube>You<b>Tube</b></YouTube>
            <SmallCaret />
          </FieldIcon>
          <TextInput aria-label="搜尋" defaultValue="越南大戰" />
          <FieldIcon $w={20} aria-label="開始搜尋"><Magnifier /></FieldIcon>
        </Field>
      </LocationRow>

      <BookmarkBar>
        {bookmarks.map(b => (
          <Bookmark key={b} href="#"><Folder />{b}</Bookmark>
        ))}
        <Bookmark href="#"><Rss />即時新聞</Bookmark>
      </BookmarkBar>

      <Body>
        <Splitter><Grip /></Splitter>
        <SideBar>
          <SideButton aria-label="搜尋頁面">{sideIcons.find}</SideButton>
          <SideRule />
          <SideButton aria-label="書籤">{sideIcons.book}</SideButton>
          <SideButton aria-label="歷史">{sideIcons.clock}</SideButton>
          <SideRule />
          <SideButton aria-label="下載">{sideIcons.save}</SideButton>
          <SideButton aria-label="附加元件">{sideIcons.puzzle}</SideButton>
          <SideRule />
          <SideButton aria-label="錯誤">{sideIcons.alert}</SideButton>
          <SideButton aria-label="選項">{sideIcons.gear}</SideButton>
          <SideButton aria-label="頁面資訊">{sideIcons.info}</SideButton>
          <SideButton>繁</SideButton>
          <SideButton>簡</SideButton>
          <SideButton><FontLetter>A<FontArrow up /></FontLetter></SideButton>
          <SideButton><FontLetter>A<FontArrow /></FontLetter></SideButton>
          <SideButton><FontLetter>A</FontLetter></SideButton>
        </SideBar>

        <Main>
          <TabBar role="tablist">
            {tabs.map((t, i) => (
              <Tab key={i} role="tab" aria-selected={!!t.active} $active={t.active}>
                <TabIcon kind={t.kind} />
                <TabLabel $loading={t.kind === 'loading'}>{t.label}</TabLabel>
                <TabBadge $active={t.active}>{i + 1}</TabBadge>
              </Tab>
            ))}
            <TabTools>
              <TabTool aria-label="分頁清單"><SmallCaret /></TabTool>
              <button aria-label="關閉分頁"><CloseGlyph /></button>
            </TabTools>
          </TabBar>

          <Viewport>
            <Page>
              <Post $grow>
                <AuthorColumn />
                <PostColumn>
                  <PostFooter>
                    <a href="#">引用</a>
                    <a href="#">使用道具</a>
                    <a href="#">報告</a>
                    <a href="#">評分</a>
                    <a href="#">回復</a>
                    <a href="#">TOP</a>
                  </PostFooter>
                </PostColumn>
              </Post>
              <Post>
                <AuthorColumn>
                  <AuthorName>
                    <a href="#">seedfintasy</a>
                    <svg width="8" height="8" viewBox="0 0 8 8">
                      <path d="M.500 3h7L4 7z" fill="#bfe3f5" stroke="#4aa6d3" />
                    </svg>
                  </AuthorName>
                  <AuthorText>(づ￣ 3￣)づ側耳傾聽</AuthorText>
                  <AuthorText $rank>白金會員</AuthorText>
                </AuthorColumn>
                <PostColumn>
                  <PostHeader>
                    <span>發表于 2009–1–18 02:53</span>
                    <AuthorOnly href="#">衹看該作者</AuthorOnly>
                    <Sizes>
                      <BlueLink href="#">小</BlueLink>
                      <BlueLink href="#">中</BlueLink>
                      <BlueLink href="#">大</BlueLink>
                    </Sizes>
                    <Floor>2</Floor>
                    <Hash>#</Hash>
                  </PostHeader>
                  <Message>
                    <span>支持一下~~~~~</span>
                    <Thumb />
                  </Message>
                </PostColumn>
              </Post>
            </Page>
            <VScroll>
              <ScrollArrow aria-label="向上捲動"><Triangle dir="up" /></ScrollArrow>
              <VThumb />
              <ScrollArrow aria-label="向下捲動"><Triangle dir="down" /></ScrollArrow>
            </VScroll>
          </Viewport>
          <HScroll>
            <ScrollArrow aria-label="向左捲動"><Triangle dir="left" /></ScrollArrow>
            <HThumb />
            <ScrollArrow aria-label="向右捲動"><Triangle dir="right" /></ScrollArrow>
            <ScrollCorner />
          </HScroll>
        </Main>
      </Body>

      <StatusBar>
        <StatusCell $w={20}><StatusScript /></StatusCell>
        <StatusText>完成</StatusText>
        <StatusCell $w={20}><Note /></StatusCell>
        <StatusCell $w={26}><Firefox size={17} /></StatusCell>
        <StatusCell $w={20}><SBadge size={16} /></StatusCell>
        <StatusCell $w={20}><PenPage /></StatusCell>
        <StatusCell $w={21}><Monkey /></StatusCell>
      </StatusBar>
    </Shell>
  );
}
